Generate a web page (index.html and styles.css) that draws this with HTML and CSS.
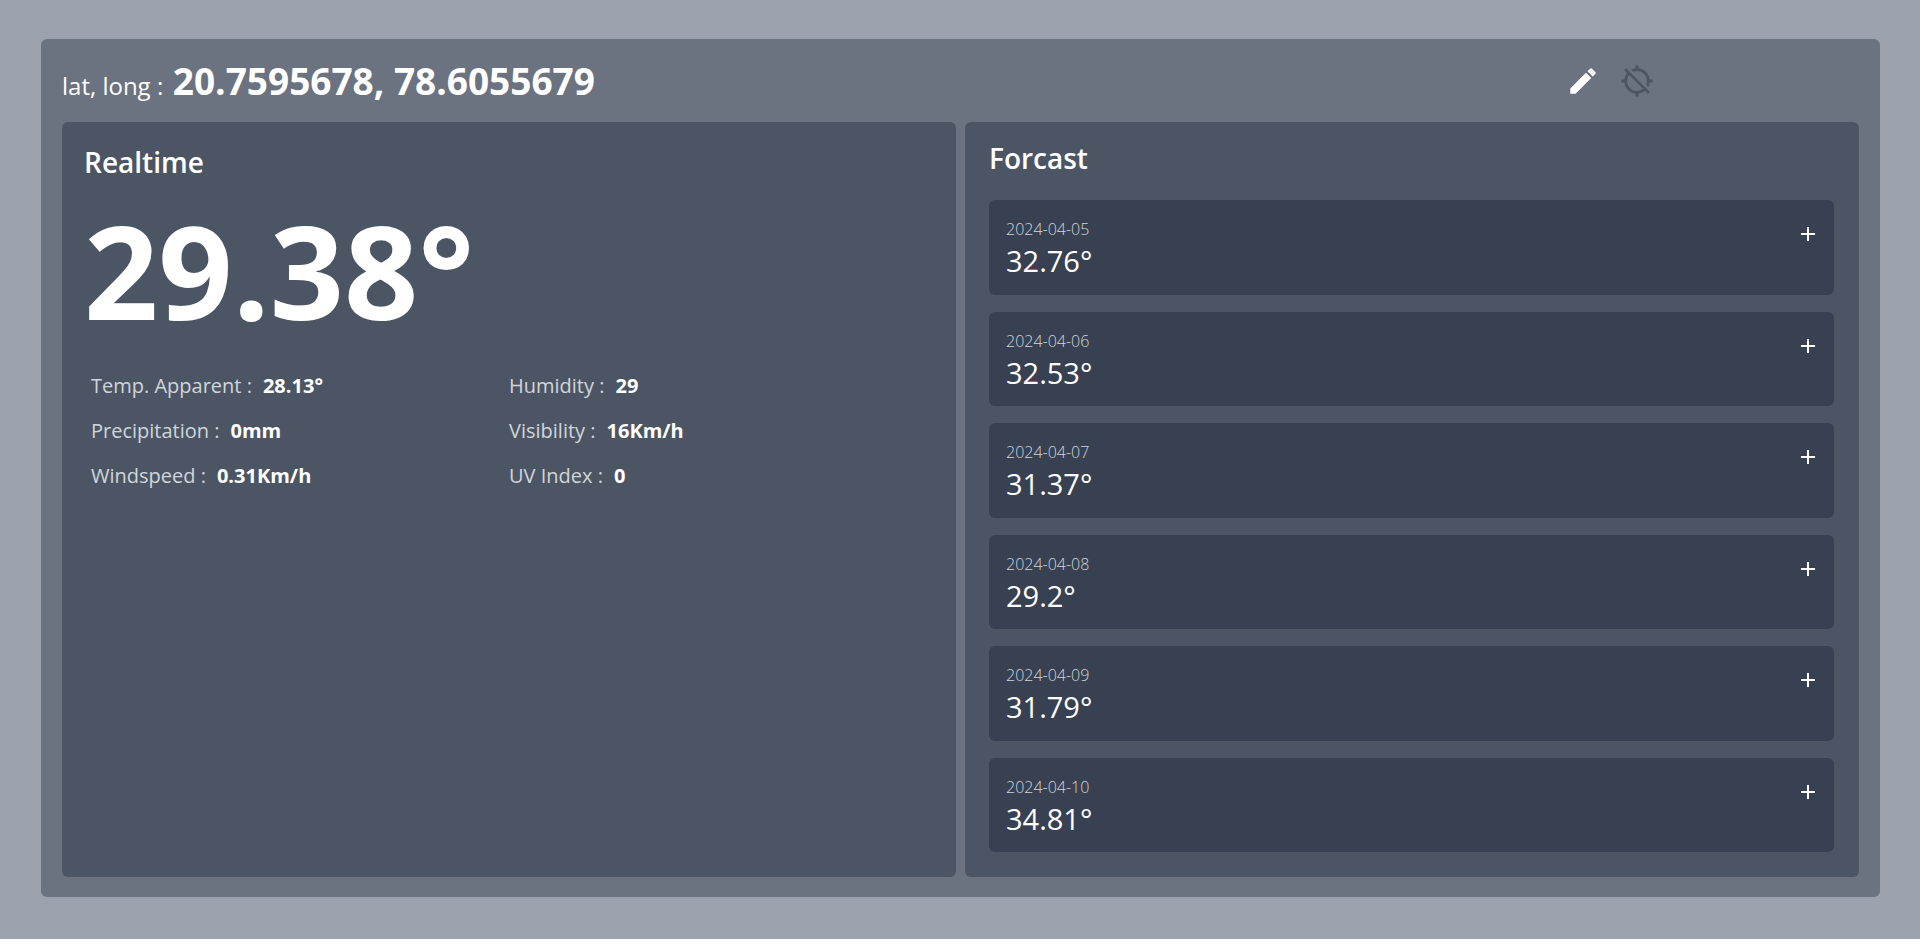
FILE: index.html
```html
<!DOCTYPE html>
<html lang="en">
<head>
<meta charset="utf-8">
<meta name="viewport" content="width=device-width, initial-scale=1">
<title>Weather</title>
<link rel="stylesheet" href="styles.css">
</head>
<body>
<svg class="sprite" aria-hidden="true">
  <symbol id="plus" viewBox="0 0 24 24"><path d="M19 13h-6v6h-2v-6H5v-2h6V5h2v6h6v2z"/></symbol>
</svg>
<div class="page">
  <main class="dashboard">
    <header class="header">
      <p class="coords"><span class="coords-label">lat, long :</span> <strong>20.7595678, 78.6055679</strong></p>
      <div class="actions">
        <button class="action" type="button" aria-label="Edit location">
          <svg viewBox="0 0 24 24"><path d="M3 17.25V21h3.75L17.81 9.94l-3.75-3.75L3 17.25zM20.71 7.04a.996.996 0 0 0 0-1.41l-2.34-2.34a.996.996 0 0 0-1.41 0l-1.83 1.83 3.75 3.75 1.83-1.83z"/></svg>
        </button>
        <button class="action action-off" type="button" aria-label="Use current location">
          <svg viewBox="0 0 24 24"><path d="M20.94 11c-.46-4.17-3.77-7.48-7.94-7.94V1h-2v2.06c-1.13.12-2.19.46-3.16.97l1.5 1.5C10.16 5.19 11.06 5 12 5c3.87 0 7 3.13 7 7 0 .94-.19 1.84-.52 2.65l1.5 1.5c.5-.96.84-2.02.97-3.15H23v-2h-2.06zM3 4.27l2.04 2.04C3.97 7.62 3.25 9.23 3.06 11H1v2h2.06c.46 4.17 3.77 7.48 7.94 7.94V23h2v-2.06c1.77-.2 3.38-.91 4.69-1.98L19.73 21 21 19.73 4.27 3 3 4.27zm13.27 13.27C15.09 18.45 13.61 19 12 19c-3.87 0-7-3.13-7-7 0-1.61.55-3.09 1.46-4.27l9.81 9.81z"/></svg>
        </button>
      </div>
    </header>
    <div class="panels">
      <section class="panel realtime">
        <h2 class="title">Realtime</h2>
        <p class="temperature">29.38°</p>
        <dl class="details">
          <div class="detail"><dt>Temp. Apparent :</dt><dd>28.13°</dd></div>
          <div class="detail"><dt>Humidity :</dt><dd>29</dd></div>
          <div class="detail"><dt>Precipitation :</dt><dd>0mm</dd></div>
          <div class="detail"><dt>Visibility :</dt><dd>16Km/h</dd></div>
          <div class="detail"><dt>Windspeed :</dt><dd>0.31Km/h</dd></div>
          <div class="detail"><dt>UV Index :</dt><dd>0</dd></div>
        </dl>
      </section>
      <section class="panel forecast">
        <h2 class="title">Forcast</h2>
        <ul class="days">
          <li class="day"><div><time class="date">2024-04-05</time><p class="degrees">32.76°</p></div><button class="expand" type="button" aria-label="Expand 2024-04-05"><svg><use href="#plus"/></svg></button></li>
          <li class="day"><div><time class="date">2024-04-06</time><p class="degrees">32.53°</p></div><button class="expand" type="button" aria-label="Expand 2024-04-06"><svg><use href="#plus"/></svg></button></li>
          <li class="day"><div><time class="date">2024-04-07</time><p class="degrees">31.37°</p></div><button class="expand" type="button" aria-label="Expand 2024-04-07"><svg><use href="#plus"/></svg></button></li>
          <li class="day"><div><time class="date">2024-04-08</time><p class="degrees">29.2°</p></div><button class="expand" type="button" aria-label="Expand 2024-04-08"><svg><use href="#plus"/></svg></button></li>
          <li class="day"><div><time class="date">2024-04-09</time><p class="degrees">31.79°</p></div><button class="expand" type="button" aria-label="Expand 2024-04-09"><svg><use href="#plus"/></svg></button></li>
          <li class="day"><div><time class="date">2024-04-10</time><p class="degrees">34.81°</p></div><button class="expand" type="button" aria-label="Expand 2024-04-10"><svg><use href="#plus"/></svg></button></li>
        </ul>
      </section>
    </div>
  </main>
</div>
</body>
</html>
```

FILE: styles.css
```css
* {
  box-sizing: border-box;
  margin: 0;
  padding: 0;
}

body {
  background: #fff;
  color: #fff;
  font-family: "Segoe UI", "Open Sans", "Noto Sans", sans-serif;
}

button {
  border: 0;
  background: none;
  color: inherit;
  cursor: pointer;
}

svg {
  display: block;
  width: 100%;
  height: 100%;
  fill: currentColor;
}

.sprite {
  display: none;
}

.page {
  display: flex;
  min-height: calc(100vh - 10px);
  padding: 39px 40px 42px 41px;
  background: #9ca3af;
}

.dashboard {
  display: flex;
  flex: 1;
  flex-direction: column;
  padding: 0 21px 20px;
  border-radius: 6px;
  background: #6b7280;
}

.header {
  display: grid;
  grid-template-columns: 1fr 293px;
  align-items: center;
  height: 83px;
}

.coords {
  padding-top: 6px;
  font-size: 37px;
  line-height: 48px;
}

.coords-label {
  font-size: 24px;
}

.actions {
  display: flex;
  gap: 20px;
}

.action {
  width: 34px;
  height: 34px;
}

.action-off {
  color: #4b5563;
}

.panels {
  display: grid;
  flex: 1;
  grid-template-columns: 1fr 1fr;
  gap: 9px;
}

.panel {
  border-radius: 6px;
  background: #4b5563;
}

.title {
  font-size: 28px;
  font-weight: 600;
  line-height: 40px;
}

.realtime {
  padding: 20px 22px;
}

.temperature {
  margin-top: 20px;
  font-size: 130px;
  font-weight: 700;
  line-height: 136px;
}

.details {
  display: grid;
  grid-template-columns: 1fr 1fr;
  margin-top: 25px;
  padding: 0 7px;
  font-size: 20px;
  line-height: 45px;
}

.detail {
  display: flex;
  gap: 11px;
}

.detail dt {
  color: #d1d5db;
}

.detail dd {
  font-weight: 700;
}

.forecast {
  display: flex;
  flex-direction: column;
  gap: 22px;
  padding: 16px 25px 25px 24px;
}

.days {
  display: flex;
  flex: 1;
  flex-direction: column;
  gap: 17px;
  list-style: none;
}

.day {
  display: flex;
  flex: 1;
  justify-content: space-between;
  padding: 16px 14px 14px 17px;
  border-radius: 6px;
  background: #374151;
}

.date {
  display: block;
  color: #d1d5db;
  font-size: 16px;
  font-weight: 300;
  line-height: 26px;
}

.degrees {
  font-size: 29px;
  line-height: 38px;
}

.expand {
  width: 24px;
  height: 24px;
  margin-top: 6px;
}
```
